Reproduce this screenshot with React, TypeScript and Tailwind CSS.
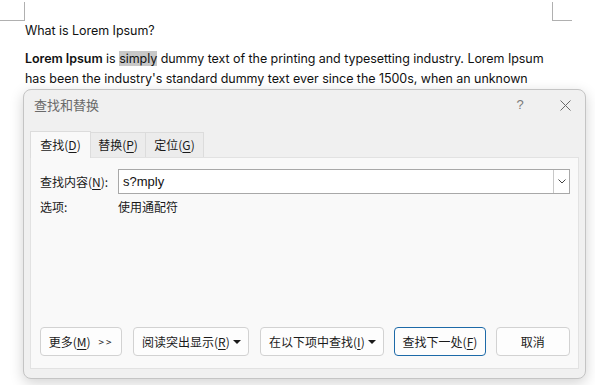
import React from "react";

const cjk = { fontFamily: '"Noto Sans CJK SC", "Noto Sans", sans-serif' };

function U({ children }: { children: React.ReactNode }) {
  return <span className="underline underline-offset-2">{children}</span>;
}

function Caret() {
  return (
    <svg width="8" height="4" viewBox="0 0 8 4" className="ml-[3px]">
      <path d="M0 0 H8 L4 4 Z" fill="#1a1a1a" />
    </svg>
  );
}

export default function App() {
  return (
    <div className="relative w-[595px] h-[385px] bg-white overflow-hidden" style={{ fontFamily: 'Inter, "Liberation Sans", sans-serif' }}>
      {/* page corner marks */}
      <div className="absolute left-0 top-[2px] w-[25px] h-[19px] border-r border-b border-[#b0b0b0]" />
      <div className="absolute left-[552px] top-[2px] w-[20px] h-[19px] border-l border-b border-[#b0b0b0]" />

      <div className="pl-[25px] pt-[21px] text-[12.5px] text-[#111] leading-[20px] tracking-[-0.05px]">
        <p>What is Lorem Ipsum?</p>
        <p className="mt-[8px]">
          <b className="font-semibold">Lorem Ipsum</b> is <span className="bg-[#c8c8c8]">simply</span> dummy text of the printing and typesetting industry. Lorem Ipsum
        </p>
        <p>has been the industry's standard dummy text ever since the 1500s, when an unknown</p>
      </div>

      {/* dialog */}
      <div
        className="absolute left-[23px] top-[89px] w-[563px] h-[290px] bg-[#f0f0f0] border border-[#c4c4c4] rounded-[8px] shadow-[0_4px_14px_rgba(0,0,0,0.18)] flex flex-col text-[12px] text-[#1a1a1a]"
        style={cjk}
      >
        <div className="h-[30px] flex items-center pl-[10px] pr-[14px] text-[#6a6a6a] text-[13px]">
          <span className="flex-1">查找和替换</span>
          <span className="w-[12px] text-center text-[#7a7a7a] mr-[34px] text-[13px]" style={{ fontFamily: '"Liberation Sans", sans-serif' }}>?</span>
          <svg width="11" height="11" viewBox="0 0 11 11">
            <path d="M0.5 0.5 L10.5 10.5 M10.5 0.5 L0.5 10.5" stroke="#6a6a6a" strokeWidth="1" />
          </svg>
        </div>

        <div className="mx-[6px] mt-[10px] flex items-end h-[27px]">
          <div className="h-[27px] w-[61px] bg-[#f9f9f9] border border-b-0 border-[#dcdcdc] flex items-center justify-center relative z-10 -mb-px pb-[1px]">
            查找(<U>D</U>)
          </div>
          <div className="h-[25px] w-[55px] bg-[#ececec] border-t border-r border-[#dcdcdc] flex items-center justify-center">
            替换(<U>P</U>)
          </div>
          <div className="h-[25px] w-[58px] bg-[#ececec] border-t border-r border-[#dcdcdc] flex items-center justify-center">
            定位(<U>G</U>)
          </div>
        </div>

        <div className="mx-[6px] h-[212px] bg-[#f9f9f9] border border-[#e2e2e2] flex flex-col pl-[9px] pr-[8px]">
          <div className="flex items-center mt-[11px] h-[25px]">
            <span className="w-[78px]">查找内容(<U>N</U>):</span>
            <div className="flex-1 h-[25px] bg-white border border-[#a8a8a8] flex items-center">
              <span className="flex-1 pl-[4px] text-[13px] text-[#111]" style={{ fontFamily: '"Liberation Sans", sans-serif' }}>s?mply</span>
              <div className="w-[16px] h-[23px] border-l border-[#c8c8c8] flex items-center justify-center">
                <svg width="8" height="5" viewBox="0 0 8 5">
                  <path d="M0.5 0.5 L4 4 L7.5 0.5" stroke="#444" strokeWidth="1" fill="none" />
                </svg>
              </div>
            </div>
          </div>
          <div className="flex items-center mt-[3px] h-[20px]">
            <span className="w-[78px]">选项:</span>
            <span>使用通配符</span>
          </div>
          <div className="flex-1" />
          <div className="flex items-center mb-[12px] h-[29px]">
            <button className="h-[29px] w-[83px] bg-[#fdfdfd] border border-[#d2d2d2] rounded-[4px] flex items-center justify-center">
              更多(<U>M</U>)<span className="ml-[8px] text-[10px] tracking-[2px]">&gt;&gt;</span>
            </button>
            <button className="ml-[11px] h-[29px] w-[117px] bg-[#fdfdfd] border border-[#d2d2d2] rounded-[4px] flex items-center justify-center">
              阅读突出显示(<U>R</U>)<Caret />
            </button>
            <button className="ml-[11px] h-[29px] w-[125px] bg-[#fdfdfd] border border-[#d2d2d2] rounded-[4px] flex items-center justify-center">
              在以下项中查找(<U>I</U>)<Caret />
            </button>
            <button className="ml-[10px] h-[29px] w-[92px] bg-[#fdfdfd] border border-[#1d6aa8] rounded-[4px] flex items-center justify-center">
              查找下一处(<U>F</U>)
            </button>
            <button className="ml-[10px] h-[29px] w-[75px] bg-[#fdfdfd] border border-[#d2d2d2] rounded-[4px] flex items-center justify-center">
              取消
            </button>
          </div>
        </div>
      </div>
    </div>
  );
}
